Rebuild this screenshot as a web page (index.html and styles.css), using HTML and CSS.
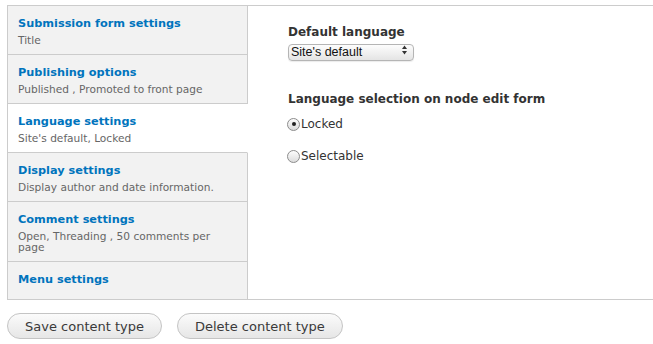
FILE: index.html
```html
<!DOCTYPE html>
<html lang="en">
<head>
    <meta charset="UTF-8">
    <title>Content type settings</title>
    <link rel="stylesheet" href="styles.css">
</head>
<body>

    <div class="vtabs">
        <ul class="tab-list">
            <li class="tab">
                <a href="#">Submission form settings</a>
                <span class="summary">Title</span>
            </li>
            <li class="tab">
                <a href="#">Publishing options</a>
                <span class="summary">Published , Promoted to front page</span>
            </li>
            <li class="tab selected">
                <a href="#">Language settings</a>
                <span class="summary">Site's default, Locked</span>
            </li>
            <li class="tab">
                <a href="#">Display settings</a>
                <span class="summary">Display author and date information.</span>
            </li>
            <li class="tab">
                <a href="#">Comment settings</a>
                <span class="summary">Open, Threading , 50 comments per page</span>
            </li>
            <li class="tab last">
                <a href="#">Menu settings</a>
            </li>
        </ul>

        <div class="pane">
            <div class="form-item">
                <label for="lang">Default language</label>
                <div class="select-wrap">
                    <select id="lang">
                        <option>Site's default</option>
                    </select>
                    <svg class="arrows" width="7" height="10" viewBox="0 0 7 10">
                        <path d="M3.5 0.5 L6 4 H1 Z" fill="#333"/>
                        <path d="M3.5 9.5 L6 6 H1 Z" fill="#333"/>
                    </svg>
                </div>
            </div>

            <div class="form-item radios">
                <span class="group-label">Language selection on node edit form</span>
                <label class="radio"><input type="radio" name="sel" checked> Locked</label>
                <label class="radio"><input type="radio" name="sel"> Selectable</label>
            </div>
        </div>
    </div>

    <div class="actions">
        <button>Save content type</button>
        <button>Delete content type</button>
    </div>

</body>
</html>
```

FILE: styles.css
```css
body {
    margin: 0;
    padding: 5px 0 0 7px;
    font-family: "DejaVu Sans", Verdana, sans-serif;
    background: white;
    color: #333;
}
.vtabs {
    display: flex;
    border: 1px solid #ccc;
    border-right: 0;
}
.tab-list {
    list-style: none;
    margin: 0;
    padding: 0;
    width: 240px;
    flex-shrink: 0;
}
.tab {
    background: #f2f2f2;
    border-bottom: 1px solid #ccc;
    border-right: 1px solid #ccc;
    padding: 8px 20px 8px 10px;
}
.tab.selected {
    background: white;
    border-right-color: white;
}
.tab.last {
    border-bottom: 0;
    padding-bottom: 10px;
}
.tab a {
    display: block;
    color: #0074bd;
    font-weight: bold;
    font-size: 11.3px;
    line-height: 19px;
    text-decoration: none;
}
.summary {
    display: block;
    margin-top: 2px;
    font-size: 10.6px;
    line-height: 11px;
    color: #666;
}
.pane {
    flex: 1;
    padding: 18px 40px;
}
.form-item label,
.group-label {
    display: block;
    font-weight: bold;
    font-size: 12px;
    line-height: 16px;
    color: #333;
}
.select-wrap {
    position: relative;
    width: 126px;
    margin-top: 1px;
}
.select-wrap select {
    appearance: none;
    -webkit-appearance: none;
    width: 100%;
    height: 17px;
    padding: 0 0 0 2px;
    border: 1px solid #b5b5b5;
    border-radius: 4px;
    background: linear-gradient(#fdfdfd, #e4e4e4);
    font-family: "Liberation Sans", Arial, sans-serif;
    font-size: 12.5px;
    line-height: 15px;
    color: #111;
    box-shadow: 0 1px 1px rgba(0, 0, 0, 0.08);
}
.arrows {
    position: absolute;
    right: 6px;
    top: 4px;
}
.radios {
    margin-top: 30px;
}
.radio {
    display: flex !important;
    align-items: center;
    font-weight: normal !important;
    margin-top: 9px;
    font-size: 12px;
}
.radio + .radio {
    margin-top: 16px;
}
.radio input {
    appearance: none;
    -webkit-appearance: none;
    width: 13px;
    height: 13px;
    margin: 0 1px 0 -1px;
    border: 1px solid #8c8c8c;
    border-radius: 50%;
    background: linear-gradient(#fdfdfd, #dcdcdc);
    position: relative;
}
.radio input:checked::after {
    content: "";
    position: absolute;
    left: 3.5px;
    top: 3.5px;
    width: 4px;
    height: 4px;
    border-radius: 50%;
    background: #222;
}
.actions {
    display: flex;
    gap: 15px;
    margin-top: 13px;
}
.actions button {
    height: 26px;
    padding: 0 17px;
    border: 1px solid #c4c4c4;
    border-radius: 13px;
    background: linear-gradient(#fbfbfb, #e6e6e6);
    font-family: "DejaVu Sans", Verdana, sans-serif;
    font-size: 13px;
    color: #3a3a3a;
}
```
